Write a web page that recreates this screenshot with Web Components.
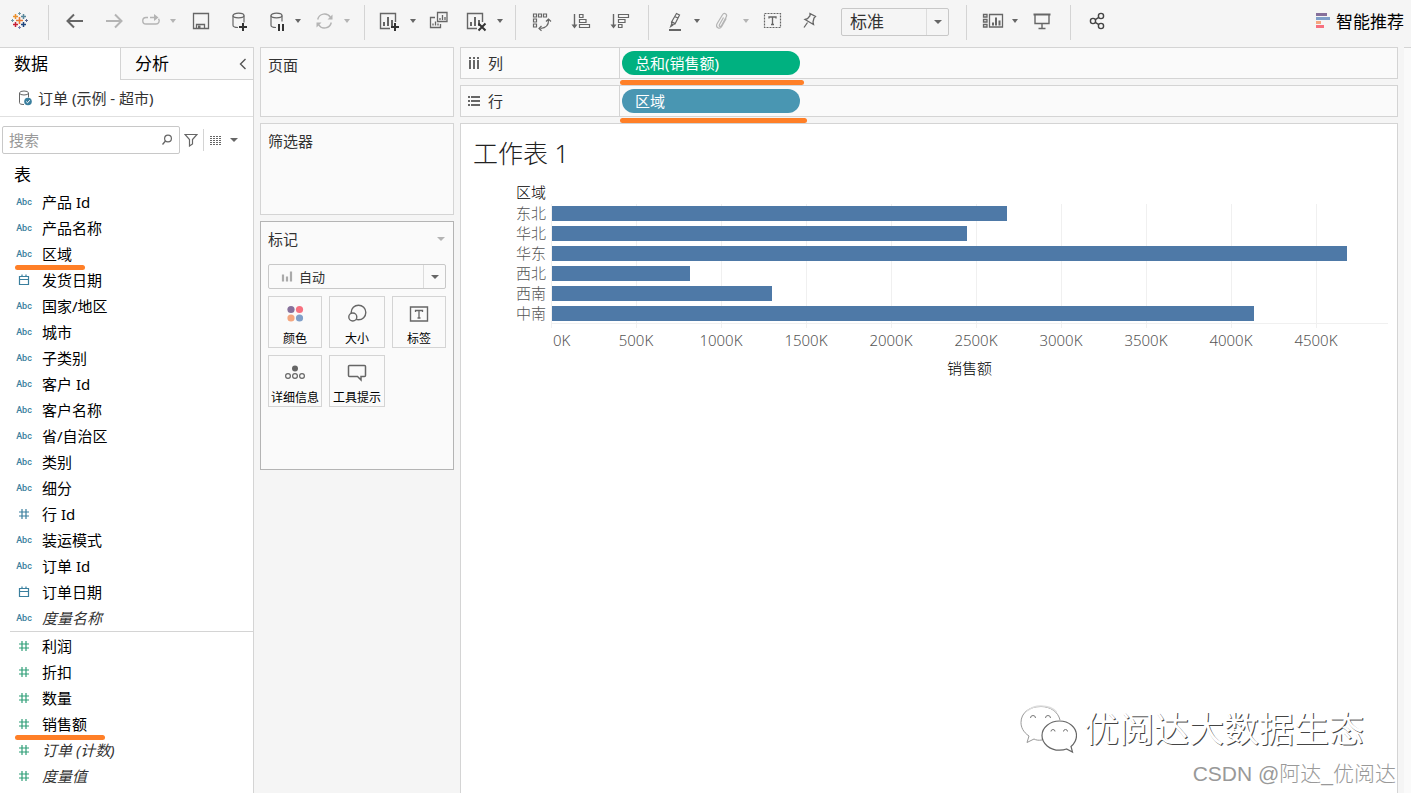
<!DOCTYPE html>
<html lang="zh-CN">
<head>
<meta charset="utf-8">
<meta name="viewport" content="width=device-width, initial-scale=1">
<title>工作表 1</title>
<style>
  body {
    margin: 0;
    background: #f5f5f5;
    color: #333;
    font: 15px/20px "Noto Sans", "Noto Sans CJK SC", sans-serif;
  }
</style>
</head>
<body>
<work-book></work-book>

<script>
const S = (w, h, body) => `<svg width="${w}" height="${h}" viewBox="0 0 ${w} ${h}" fill="none" stroke="currentColor" aria-hidden="true">${body}</svg>`;
const DB = '<path stroke-width="1.2" d="M13 19.5c-3 0-5-.9-5-2.2V7.5M19 7.500v7"/><ellipse stroke-width="1.2" cx="13.500" cy="7.500" rx="5.500" ry="2.300"/>';
const plus = (x, y, r, c, w) => `<path stroke="${c}" stroke-width="${w}" d="M${x - r} ${y}h${2 * r}M${x} ${y - r}v${2 * r}"/>`;
const SHEET = '<path stroke-width="1.400" d="M12 20.500H2.500v-15h15V14"/><path stroke-width="2" d="M6 18v-4M10 18V9M14 18v-6"/>';

const ICONS = {
  logo: S(26, 26,
    plus(13.5, 12.5, 3.5, '#eb7a34', 1.6) + plus(9.5, 8.5, 2.5, '#eb912c', 1.5) + plus(17.5, 8.5, 2.5, '#59879b', 1.5) +
    plus(9.5, 16.5, 2.5, '#c72037', 1.5) + plus(17.5, 16.5, 2.5, '#1f457e', 1.5) + plus(13.5, 5.5, 1.5, '#7099a6', 1) +
    plus(13.5, 19.5, 1.5, '#7a7fb0', 1) + plus(6.5, 12.5, 1.5, '#7099a6', 1) + plus(20.5, 12.5, 1.5, '#5b6591', 1)),
  back: S(26, 26, '<path stroke-width="2" d="M5.500 13H21M12 6.500L5.500 13l6.500 6.500"/>'),
  forward: S(26, 26, '<path stroke-width="2" d="M6 13h15.500M15 6.500l6.500 6.500-6.500 6.500"/>'),
  redo: S(26, 26, '<path stroke-width="1.400" d="M10 9.500H8a3.200 3.200 0 0 0 0 6.500h10a3.200 3.200 0 0 0 2.500-5.200M12 9.500h7"/><path fill="currentColor" stroke="none" d="M16 6l4.500 3.500L16 13z"/>'),
  save: S(26, 26, '<path stroke-width="1.300" d="M6.500 5.500h15v15h-15zM9.500 20.500v-4h8v4"/><path fill="currentColor" stroke="none" d="M11 17.500h2.500V20H11z"/>'),
  dbAdd: S(26, 26, DB + plus(18, 19, 4, '#333', 2)),
  dbPause: S(26, 26, DB.replace('v7"', 'v6"') + '<path stroke="#333" stroke-width="2" d="M16 16v7M20 16v7"/>'),
  refresh: S(26, 26, '<path stroke-width="1.400" d="M5.700 11.500a7 7 0 0 1 12.800-2.200M19.300 14.500A7 7 0 0 1 6.500 16.700"/><path fill="currentColor" stroke="none" d="M20.500 6.500v5h-5zM4.500 19.500v-5h5z"/>'),
  sheetNew: S(26, 26, SHEET + plus(17, 19, 4, '#333', 2)),
  sheetCopy: S(26, 26, '<path stroke-width="1.300" d="M10.500 4.500h9.500v9h-9.500zM8 9.500H3.500v10h10V16"/><path stroke-width="1.300" d="M13 12v-2M15.500 12V7M18 12V9M6 17.500v-2M8.500 17.500v-4M11 17.500v-2"/>'),
  sheetClear: S(26, 26, SHEET + '<path stroke="#333" stroke-width="2" d="M13.500 15.500l7 7M20.500 15.500l-7 7"/>'),
  swap: S(26, 26, '<path stroke-width="1.200" d="M4.500 6h3v3h-3zM9.500 6h3v3h-3zM14.500 6h3v3h-3zM4.500 11h3v3h-3zM4.500 16h3v3h-3zM19.500 12c.2 5-2.500 8-8 8.500M17 13.500l2.500-2.500 2.500 2.500M12.500 18L10 20.500l2.500 2.300"/>'),
  sortAsc: S(26, 26, '<path stroke-width="1.400" d="M5.500 6v13"/><path fill="currentColor" stroke="none" d="M2.500 16.500h6l-3 4z"/><path stroke-width="1.200" d="M10.500 6.500h3.500v3h-3.500zM10.500 11.500h6.500v3h-6.500zM10.500 16.500h10v3h-10z"/>'),
  sortDesc: S(26, 26, '<path stroke-width="1.400" d="M4.500 6v13"/><path fill="currentColor" stroke="none" d="M1.500 16.500h6l-3 4z"/><path stroke-width="1.200" d="M9.500 6.500h10v3h-10zM9.500 11.500h6.500v3H9.500zM9.500 16.500h3.500v3H9.500z"/>'),
  highlight: S(26, 26, '<path stroke-width="1.200" d="M14.500 5.500l3 1.500-4.500 9-3 .5-.5-2.500zM12.500 8.500l3.500 1.500M9.500 13.500l3.500 2M9.700 16l-1 2.500 2.500-1.500"/><path stroke-width="2" d="M7 22h12"/>'),
  clip: S(26, 26, '<path stroke-width="1.200" d="M12.500 9.500l-4 7c-1 1.800 1 2.800 2 1l4.700-8.500c1.600-3-2.200-4.800-3.700-2.200L6.200 15.500c-2.200 4 2.500 6.300 4.500 3l4.500-8"/>'),
  label: S(26, 26, '<path stroke-width="1.200" stroke-dasharray="2 1" d="M4.500 5.500h16v14h-16z"/><path stroke-width="1.300" d="M9 10.500V9h7v1.500M12.500 9v7.500M11 16.500h3"/>'),
  pin: S(26, 26, '<path stroke-width="1.300" d="M12 5.500l5.500 3-1.500 1.500-1 4 .5 2.500-8.500-5 2.500-.8 2.500-3zM9.500 14.500L6 19.500"/>'),
  cards: S(26, 26, '<path stroke-width="1.300" d="M3.500 6.500h3.500v2.500H3.500zM3.500 11.500h3.500V14H3.500zM3.500 16.500h3.500V19H3.500zM9.500 6.500h13V19h-13z"/><path stroke-width="2" d="M13 17.500v-3M16 17.500V9.500M19.500 17.500v-5"/>'),
  present: S(26, 26, '<path stroke-width="2" d="M4.500 6.500h17"/><path stroke-width="1.400" d="M6 7v8.500h14V7M13 15.500v5M9.500 20.500h7"/>'),
  share: S(26, 26, '<path stroke="#444" stroke-width="1.400" d="M11.300 11.600l3.500-2.200M11.300 14.400l3.500 2.200"/><g stroke="#444" stroke-width="1.400"><circle cx="17" cy="8" r="2.600"/><circle cx="9" cy="13" r="2.600"/><circle cx="17" cy="18" r="2.600"/></g>'),
  advise: S(14, 16, '<g stroke="none"><path fill="#86709b" d="M0 0h11v3H0z"/><path fill="#7f9fc9" d="M0 4h14v3H0z"/><path fill="#f4a67f" d="M0 8h5v3H0z"/><path fill="#f7707f" d="M0 12h8v3H0z"/></g>'),
  caret: S(10, 6, '<path fill="currentColor" stroke="none" d="M1 1h6L4 5z"/>'),
  caretBig: S(10, 6, '<path fill="currentColor" stroke="none" d="M1 1h8L5 5z"/>'),
  chevron: S(8, 12, '<path stroke-width="1.400" d="M6.500 1L1.500 6l5 5"/>'),
  source: S(14, 18, '<path d="M6 15.500c-3 0-4.500-.6-4.500-1.800V4M10.500 4v4.500"/><ellipse cx="6" cy="4" rx="4.500" ry="2"/><circle cx="10" cy="12.500" r="3.800" fill="#3a7f9e" stroke="none"/><path stroke="#fff" d="M8.200 12.500l1.300 1.300 2.300-2.600"/>'),
  search: S(12, 12, '<circle cx="7" cy="4.500" r="3.400" stroke-width="1.200"/><path stroke-width="1.300" d="M4.500 7L1.500 10.500"/>'),
  filter: S(14, 14, '<path stroke-width="1.200" d="M1 1.500h12l-4.500 5v4.500l-3 2V6.500z"/>'),
  grid: S(12, 9, '<path stroke-dasharray="2 1" d="M0 .5h12M0 2.500h12M0 4.500h12M0 6.500h12M0 8.500h12"/>'),
  calendar: S(12, 12, '<path stroke-width="1.200" d="M1.500 2.500h9v8h-9zM1.500 5.500h9M4 .5v2M8 .5v2"/>'),
  hash: S(12, 12, '<path stroke-width="1.200" d="M4 1v10M8 1v10M1 4h10M1 8h10"/>'),
  columns: S(12, 12, '<path stroke-width="2" d="M2 0v2M2 3v9M6 0v2M6 3v9M10 0v2M10 3v9"/>'),
  rows: S(12, 12, '<path stroke-width="2" d="M0 2h2M3 2h9M0 6h2M3 6h9M0 10h2M3 10h9"/>'),
  bars: S(12, 12, '<path stroke-width="1.200" d="M1.500 4h1v6h-1zM5.500 6h1v4h-1zM9.500 1h1v9h-1z"/>'),
  color: S(20, 20, '<g stroke="none"><circle cx="6" cy="5.500" r="3.600" fill="#86709b"/><circle cx="14.500" cy="5.500" r="3.600" fill="#f7707f"/><circle cx="6" cy="14" r="3.600" fill="#f4a67f"/><circle cx="14.500" cy="14" r="3.600" fill="#7f9fc9"/></g>'),
  size: S(20, 20, '<circle cx="11.500" cy="8.500" r="7.300" stroke-width="1.400"/><circle cx="5.800" cy="13" r="4" stroke-width="1.400" fill="#fafafa"/>'),
  text: S(20, 20, '<path stroke-width="1.400" d="M1.500 3h17v14h-17z"/><path stroke-width="1.300" d="M6.500 8V6.500h7V8M10 6.500V14M8.500 14h3"/>'),
  detail: S(20, 20, '<circle cx="10" cy="5.500" r="3" fill="currentColor" stroke="none"/><g stroke-width="1.200"><circle cx="3" cy="13" r="2.400"/><circle cx="10" cy="13" r="2.400"/><circle cx="17" cy="13" r="2.400"/></g>'),
  tooltip: S(20, 20, '<path stroke-width="1.500" d="M2.500 2.500h15a1 1 0 0 1 1 1v9a1 1 0 0 1-1 1H14V17l-3.500-3.500h-8a1 1 0 0 1-1-1v-9a1 1 0 0 1 1-1z"/>'),
  wechat: S(60, 50, '<path stroke="#999" d="M25 36c-4 .6-6 0-8-1l-7 3.500 2-6.500C6 28 4 23 4 18.500 4 9 12 2.500 24 2.500c9 0 17 5 19 13.500"/><path stroke="#ddd" stroke-width="1.500" d="M10 7c4-3.500 8-5 14-5 6 0 12 2 15.500 6"/><path fill="#fff" stroke="#666" stroke-width="1.200" d="M42.500 17C52 17 59.500 23.500 59.500 31.500c0 4.500-2 8-5.500 11l1.500 5.500-6-3c-2 .8-4.500 1.200-7 1.200-9.500 0-17.500-6.500-17.500-14.700S33 17 42.500 17z"/><path stroke="#777" d="M13.500 14a2.500 2.500 0 1 1 5 0M28.500 14a2.500 2.500 0 1 1 5 0M34 27.500a2 2 0 1 1 4 0M46.500 27.500a2 2 0 1 1 4 0"/>')
};

class Base extends HTMLElement {
  constructor() {
    super();
    this.attachShadow({ mode: 'open' });
  }
  connectedCallback() {
    const t = document.createElement('template');
    t.innerHTML = '<style>*{box-sizing:border-box}svg{display:block}button{font:inherit;color:inherit;background:none;border:0;padding:0;margin:0}' + this.css() + '</style>' + this.html();
    this.shadowRoot.replaceChildren(t.content.cloneNode(true));
  }
  attr(name) { return this.getAttribute(name) || ''; }
}

/* Toolbar button, optionally with a drop-down arrow beside it. */
customElements.define('tool-button', class extends Base {
  css() {
    return `:host{display:flex;gap:5px;color:#666}
      :host([split]){margin-right:-4px}
      :host([off]){color:#b4b4b4}
      button{width:26px;height:32px;display:grid;place-items:center}
      .more{width:10px}`;
  }
  html() {
    const l = this.attr('label');
    return `<button aria-label="${l}">${ICONS[this.attr('icon')]}</button>` +
      (this.hasAttribute('split') ? `<button class="more" aria-label="${l} 菜单">${ICONS.caret}</button>` : '');
  }
});

customElements.define('tool-group', class extends Base {
  css() {
    return `:host{display:flex;gap:12px;padding:0 var(--end,13px) 0 13px;border-left:1px solid #d4d4d4}
      :host([wide]){gap:14px}`;
  }
  html() { return '<slot></slot>'; }
});

/* Drop-down with its own arrow cell. */
customElements.define('pick-list', class extends Base {
  css() {
    return `:host{display:block}
      .box{display:grid;grid-template-columns:1fr 22px;height:100%;border:1px solid #c8c8c8;border-radius:2px}
      select{grid-area:1/1/2/3;appearance:none;border:0;margin:0;background:none;font:inherit;color:inherit;padding:0 0 0 var(--indent,8px);width:100%;height:100%}
      .icon{grid-area:1/1;align-self:center;margin-left:12px;color:#aaa;pointer-events:none}
      .arrow{grid-area:1/2;display:grid;place-items:center;border-left:1px solid #dcdcdc;color:#666;pointer-events:none}`;
  }
  html() {
    const i = this.attr('icon');
    return `<div class="box"><select aria-label="${this.attr('label')}"><option>${this.attr('value')}</option></select>
      ${i ? `<span class="icon">${ICONS[i]}</span>` : ''}<span class="arrow">${ICONS.caretBig}</span></div>`;
  }
});

customElements.define('tool-bar', class extends Base {
  css() {
    return `:host{display:flex;height:47px;box-sizing:border-box;padding:5px 0 7px 6px;font-size:17px}
      .logo{margin-right:16px}
      .after-split{--end:15px}
      pick-list{width:108px;height:28px;margin:3px 4px 0 5px}
      .advise{margin-left:auto;padding-right:7px;height:34px;display:flex;align-items:center;gap:6px;color:#000;white-space:nowrap}
      .advise svg{margin-bottom:3px}`;
  }
  html() {
    return `
    <tool-button class="logo" icon="logo" label="起始页"></tool-button>
    <tool-group class="after-split">
      <tool-button icon="back" label="后退"></tool-button>
      <tool-button icon="forward" label="前进" off></tool-button>
      <tool-button icon="redo" label="重做" off split></tool-button>
      <tool-button icon="save" label="保存"></tool-button>
      <tool-button icon="dbAdd" label="新建数据源"></tool-button>
      <tool-button icon="dbPause" label="暂停自动更新" split></tool-button>
      <tool-button icon="refresh" label="运行更新" off split></tool-button>
    </tool-group>
    <tool-group>
      <tool-button icon="sheetNew" label="新建工作表" split></tool-button>
      <tool-button icon="sheetCopy" label="复制工作表"></tool-button>
      <tool-button icon="sheetClear" label="清除工作表" split></tool-button>
    </tool-group>
    <tool-group wide>
      <tool-button icon="swap" label="交换行和列"></tool-button>
      <tool-button icon="sortAsc" label="升序排序"></tool-button>
      <tool-button icon="sortDesc" label="降序排序"></tool-button>
    </tool-group>
    <tool-group>
      <tool-button icon="highlight" label="突出显示" split></tool-button>
      <tool-button icon="clip" label="成员分组" off split></tool-button>
      <tool-button icon="label" label="显示标记标签"></tool-button>
      <tool-button icon="pin" label="固定轴"></tool-button>
      <pick-list label="适合" value="标准"></pick-list>
    </tool-group>
    <tool-group class="after-split">
      <tool-button icon="cards" label="显示/隐藏卡" split></tool-button>
      <tool-button icon="present" label="演示模式"></tool-button>
    </tool-group>
    <tool-group>
      <tool-button icon="share" label="共享"></tool-button>
    </tool-group>
    <button class="advise">${ICONS.advise}<span>智能推荐</span></button>`;
  }
});

/* One field in the data pane. */
customElements.define('field-item', class extends Base {
  css() {
    return `:host{display:block;position:relative;color:#000}
      button{width:100%;height:26px;display:flex;align-items:center;text-align:left}
      .type{width:16px;margin:0 10px 0 16px;display:grid;place-items:center;color:#3a7f9e;font:500 9px/12px Roboto,sans-serif}
      :host([measure]) .type{color:#2f9e77}
      :host([generated]) .name{font-style:italic;color:#333}
      :host([marked])::after{content:"";position:absolute;left:15px;bottom:-3px;width:var(--mark,70px);height:5px;border-radius:3px;background:#ff7f27;z-index:1}`;
  }
  html() {
    const i = this.attr('icon');
    return `<button><span class="type">${i ? ICONS[i] : 'Abc'}</span><span class="name"><slot></slot></span></button>`;
  }
});

customElements.define('data-pane', class extends Base {
  css() {
    return `:host{display:block;background:#fff;border-top:1px solid #d4d4d4;border-right:1px solid #d4d4d4}
      .tabs{display:grid;grid-template-columns:120px 1fr;height:32px;font-size:17px;color:#000}
      .tabs button{text-align:left;padding-left:14px}
      .second{display:flex;background:#fafafa;border:solid #d4d4d4;border-width:0 0 1px 1px}
      .second button:first-child{flex:1}
      .second button:last-child{padding:0 6px;color:#555}
      .source{width:100%;height:37px;display:flex;align-items:center;gap:6px;padding-left:18px;border-bottom:1px solid #e0e0e0;color:#333}
      .source svg{color:#666}
      .find{display:flex;align-items:center;gap:5px;padding:9px 0 0 2px;color:#666}
      .box{width:178px;height:28px;display:flex;align-items:center;border:1px solid #c8c8c8;border-radius:2px;padding:0 6px;background:#fff}
      input{flex:1;min-width:0;border:0;outline:0;padding:0;font:inherit;background:none}
      input::placeholder{color:#999;opacity:1}
      .filter{margin-left:-1px}
      .view{display:flex;align-items:center;gap:7px;height:22px;padding-left:6px;border-left:1px solid #d4d4d4}
      h2{margin:11px 0 4px 14px;font:inherit;font-size:17px;color:#000}
      .measures{margin-left:10px;border-top:1px solid #d4d4d4;padding-top:1px}
      .measures field-item{margin-left:-10px}`;
  }
  html() {
    return `
    <div class="tabs">
      <button>数据</button>
      <div class="second"><button>分析</button><button aria-label="折叠">${ICONS.chevron}</button></div>
    </div>
    <button class="source">${ICONS.source}<span>订单 (示例 - 超市)</span></button>
    <div class="find">
      <label class="box"><input type="text" placeholder="搜索" aria-label="搜索">${ICONS.search}</label>
      <button class="filter" aria-label="筛选字段">${ICONS.filter}</button>
      <button class="view" aria-label="查看方式">${ICONS.grid}${ICONS.caretBig}</button>
    </div>
    <h2>表</h2>
    <div>
      <field-item>产品 Id</field-item>
      <field-item>产品名称</field-item>
      <field-item marked>区域</field-item>
      <field-item icon="calendar">发货日期</field-item>
      <field-item>国家/地区</field-item>
      <field-item>城市</field-item>
      <field-item>子类别</field-item>
      <field-item>客户 Id</field-item>
      <field-item>客户名称</field-item>
      <field-item>省/自治区</field-item>
      <field-item>类别</field-item>
      <field-item>细分</field-item>
      <field-item icon="hash">行 Id</field-item>
      <field-item>装运模式</field-item>
      <field-item>订单 Id</field-item>
      <field-item icon="calendar">订单日期</field-item>
      <field-item generated>度量名称</field-item>
    </div>
    <div class="measures">
      <field-item measure icon="hash">利润</field-item>
      <field-item measure icon="hash">折扣</field-item>
      <field-item measure icon="hash">数量</field-item>
      <field-item measure icon="hash" marked style="--mark:90px">销售额</field-item>
      <field-item measure icon="hash" generated>订单 (计数)</field-item>
      <field-item measure icon="hash" generated>度量值</field-item>
    </div>`;
  }
});

customElements.define('side-card', class extends Base {
  css() {
    return `:host{display:block;box-sizing:border-box;min-height:var(--min,70px);background:#fafafa;border:1px solid #d4d4d4;padding:7px}
      :host([strong]){border-color:#b4b4b4}
      header{display:flex;align-items:center;justify-content:space-between;height:20px}
      h2{margin:0;font:inherit}
      header svg{color:#b4b4b4}`;
  }
  html() {
    return `<header><h2>${this.attr('heading')}</h2>${this.hasAttribute('strong') ? `<button aria-label="标记菜单">${ICONS.caretBig}</button>` : ''}</header><slot></slot>`;
  }
});

customElements.define('mark-button', class extends Base {
  css() {
    return `:host{display:block}
      button{width:100%;height:52px;border:1px solid #d4d4d4;display:flex;flex-direction:column;align-items:center;justify-content:space-between;padding-top:7px;color:#666;white-space:nowrap}
      span{font-size:12px;line-height:16px;color:#000}`;
  }
  html() { return `<button>${ICONS[this.attr('icon')]}<span><slot></slot></span></button>`; }
});

customElements.define('card-stack', class extends Base {
  css() {
    return `:host{display:flex;flex-direction:column;gap:6px}
      .filters{--min:92px}
      .marks{--min:249px}
      pick-list{height:25px;margin:15px 0 7px;--indent:30px;font-size:13px}
      .grid{display:grid;grid-template-columns:54fr 56fr 54fr;gap:7px}`;
  }
  html() {
    return `
    <side-card heading="页面"></side-card>
    <side-card class="filters" heading="筛选器"></side-card>
    <side-card class="marks" heading="标记" strong>
      <pick-list label="标记类型" value="自动" icon="bars"></pick-list>
      <div class="grid">
        <mark-button icon="color">颜色</mark-button>
        <mark-button icon="size">大小</mark-button>
        <mark-button icon="text">标签</mark-button>
        <mark-button icon="detail">详细信息</mark-button>
        <mark-button icon="tooltip">工具提示</mark-button>
      </div>
    </side-card>`;
  }
});

/* Columns or rows shelf holding one pill. */
customElements.define('field-shelf', class extends Base {
  css() {
    return `:host{display:flex;position:relative;height:32px;box-sizing:border-box;background:#fafafa;border:1px solid #d4d4d4}
      .name{width:159px;display:flex;align-items:center;gap:8px;padding-left:7px;border-right:1px solid #d4d4d4;color:#333}
      .name svg{color:#666}
      .pill{width:178px;height:24px;margin:3px 2px;padding-left:13px;border-radius:12px;text-align:left;color:#fff;background:var(--pill)}
      :host::after{content:"";position:absolute;left:159px;bottom:-7px;width:var(--mark);height:5px;border-radius:3px;background:#ff7f27;z-index:1}`;
  }
  html() {
    return `<div class="name">${ICONS[this.attr('icon')]}<span>${this.attr('heading')}</span></div><button class="pill"><slot></slot></button>`;
  }
});

customElements.define('bar-chart', class extends Base {
  css() {
    const cols = `grid-template-columns:repeat(9,500fr) 424fr`;
    return `:host{display:grid;grid-template-columns:90px 1fr;padding-right:9px;color:#555;font-weight:300}
      .head,.cats{text-align:right;padding-right:5px}
      .head{height:20px;line-height:16px;color:#000}
      .cats,.plot{grid-row:2}
      .cats{margin-top:-1px}
      .plot{display:grid;grid-template-rows:119px 5px;grid-column:2}
      .lines{grid-area:1/1/3/2;display:grid;${cols}}
      .lines i{border-left:1px solid #f0f0f0}
      .base{grid-area:1/1;border-bottom:1px solid #f0f0f0;height:120px}
      .bars{grid-area:1/1;padding:2px 0 0 1px;display:flex;flex-direction:column;gap:5px}
      .bars i{height:15px;background:#4e79a7;width:calc(var(--v) / 4920 * 100%)}
      .ticks{grid-area:3/2;display:grid;${cols};padding-top:2px}
      .ticks span{display:flex;justify-content:center;width:0;white-space:nowrap}
      .ticks span:first-child{justify-content:flex-start;padding-left:2px}
      .title{grid-area:4/2;text-align:center;color:#000;padding-top:8px}`;
  }
  html() {
    const data = [['东北', 2676], ['华北', 2441], ['华东', 4676], ['西北', 812], ['西南', 1294], ['中南', 4129]];
    const steps = Array.from({ length: 10 }, (_, k) => k * 500);
    return `
    <div class="head">区域</div>
    <div class="cats">${data.map(d => `<div>${d[0]}</div>`).join('')}</div>
    <div class="plot">
      <div class="lines">${steps.map(() => '<i></i>').join('')}</div>
      <div class="base"></div>
      <div class="bars">${data.map(d => `<i style="--v:${d[1]}"></i>`).join('')}</div>
    </div>
    <div class="ticks">${steps.map(s => `<span>${s}K</span>`).join('')}</div>
    <div class="title">销售额</div>`;
  }
});

customElements.define('work-sheet', class extends Base {
  css() {
    return `:host{display:block;position:relative;flex:1;background:#fff;border:solid #d4d4d4;border-width:1px 1px 0}
      h1{margin:13px 0 15px 12px;font-size:25px;line-height:32px;font-weight:300;color:#222}
      .credit{position:absolute;right:1px;bottom:3px;display:flex;flex-direction:column;align-items:flex-end;gap:4px;white-space:nowrap}
      .brand{display:flex;align-items:center;gap:7px;margin-right:32px;font-size:35px;line-height:50px;color:#fff;text-shadow:1px 1px 0 #444}
      .by{font:300 21px/32px "Liberation Sans","Noto Sans CJK SC",sans-serif;color:#999}`;
  }
  html() {
    return `<h1>工作表 1</h1><bar-chart></bar-chart>
    <div class="credit"><div class="brand">${ICONS.wechat}<span>优阅达大数据生态</span></div><div class="by">CSDN @阿达_优阅达</div></div>`;
  }
});

customElements.define('work-book', class extends Base {
  css() {
    return `:host{display:flex;flex-direction:column;min-height:100vh}
      .body{flex:1;display:grid;grid-template-columns:254px 194px 1fr 7px;gap:6px}
      main{display:flex;flex-direction:column;gap:6px;min-width:0}
      .edge{background:#fafafa;border-top:1px solid #d4d4d4}`;
  }
  html() {
    return `<tool-bar></tool-bar>
    <div class="body">
      <data-pane></data-pane>
      <card-stack></card-stack>
      <main>
        <field-shelf icon="columns" heading="列" style="--pill:#00b180;--mark:184px">总和(销售额)</field-shelf>
        <field-shelf icon="rows" heading="行" style="--pill:#4996b2;--mark:187px">区域</field-shelf>
        <work-sheet></work-sheet>
      </main>
      <div class="edge"></div>
    </div>`;
  }
});
</script>
</body>
</html>
